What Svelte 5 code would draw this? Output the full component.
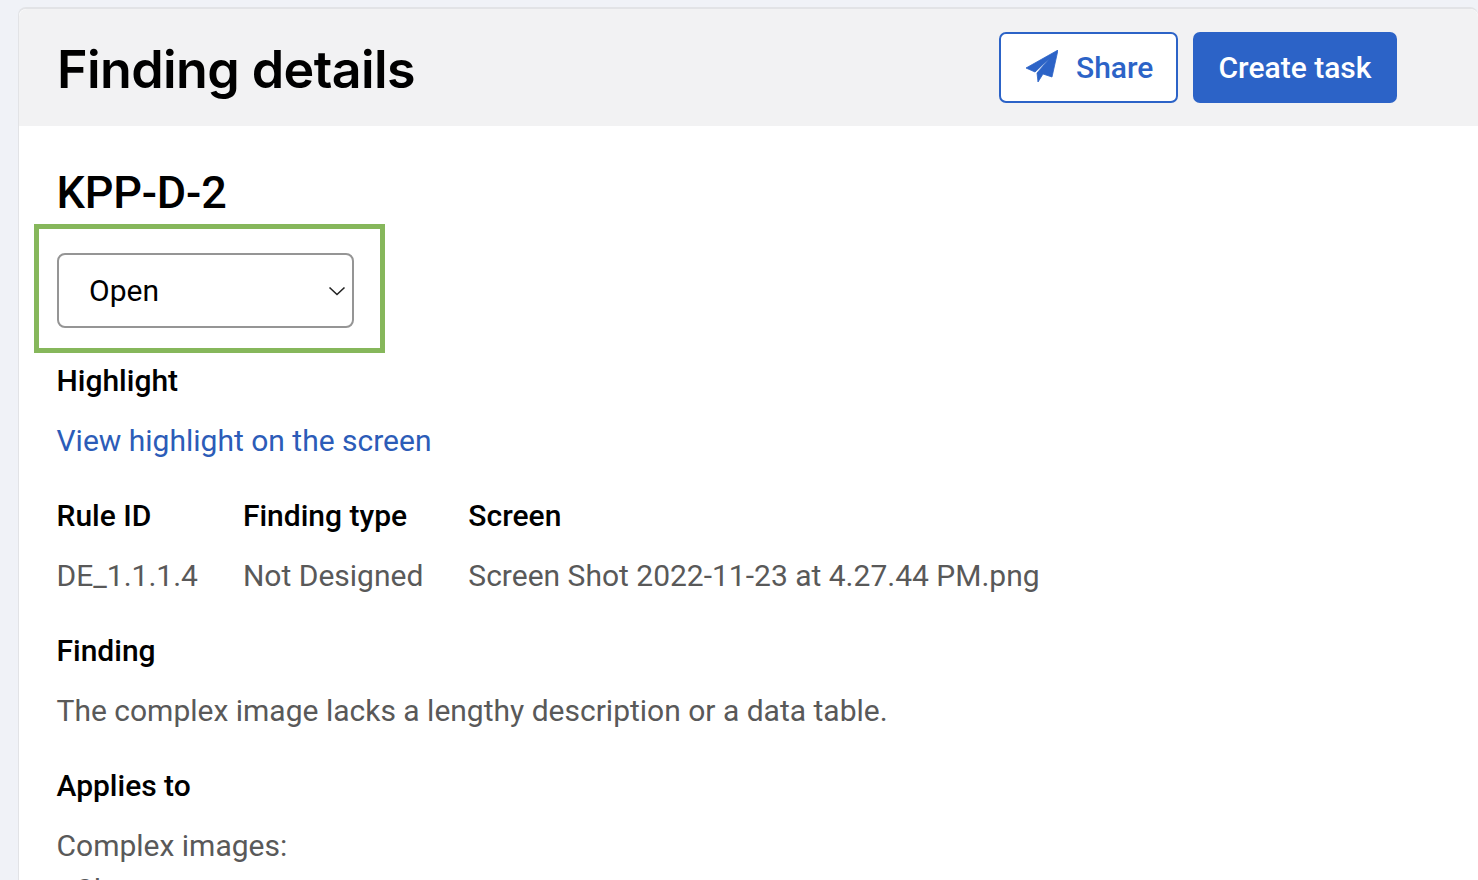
<script>
const meta = [
	{ label: "Rule ID", value: "DE_1.1.1.4" },
	{ label: "Finding type", value: "Not Designed" },
	{ label: "Screen", value: "Screen Shot 2022-11-23 at 4.27.44 PM.png" }
];
</script>

<div class="page">
	<div class="card">
		<header>
			<h1>Finding details</h1>
			<div class="actions">
				<button class="btn share">
					<svg width="32" height="32" viewBox="0 0 32 32" aria-hidden="true">
						<path d="M32 0 L0 18 L9 22 L24 8 L11 23 L12 32 L17 24 L26 27 Z" fill="currentColor" stroke="currentColor" stroke-width="0.8" stroke-linejoin="round" />
					</svg>
					<span>Share</span>
				</button>
				<button class="btn primary">Create task</button>
			</div>
		</header>
		<main>
			<h2>KPP-D-2</h2>
			<div class="status-box">
				<div class="select">
					<span>Open</span>
					<svg width="18" height="10" viewBox="0 0 18 10" aria-hidden="true">
						<path d="M1.5 1.5 L9 8.5 L16.5 1.5" fill="none" stroke="#222" stroke-width="1.6" />
					</svg>
				</div>
			</div>

			<h3 class="first">Highlight</h3>
			<a href="#highlight">View highlight on the screen</a>

			<div class="meta">
				{#each meta as m}
					<div>
						<h3>{m.label}</h3>
						<p>{m.value}</p>
					</div>
				{/each}
			</div>

			<h3>Finding</h3>
			<p>The complex image lacks a lengthy description or a data table.</p>

			<h3 class="applies">Applies to</h3>
			<p>Complex images:</p>
			<ul>
				<li>Charts</li>
			</ul>
		</main>
	</div>
</div>

<style>
:global(body) {
	margin: 0;
	overflow: hidden;
	background: #f0f2f7;
}

.page {
	height: 880px;
	overflow: hidden;
	padding: 7px 0 0 18px;
	box-sizing: border-box;
	font-family: Roboto, sans-serif;
}

.card {
	background: #fff;
	border-left: 1px solid #e2e3e6;
	border-top: 2px solid #e2e3e6;
	border-top-left-radius: 8px;
	border-top-right-radius: 8px;
	min-height: 900px;
}

header {
	background: #f2f2f3;
	height: 117px;
	display: flex;
	align-items: center;
	justify-content: space-between;
	padding: 0 81px 0 38px;
	box-sizing: border-box;
	border-top-left-radius: 8px;
	border-top-right-radius: 8px;
}

h1 {
	margin: 3px 0 0;
	font-family: Inter, sans-serif;
	font-weight: 600;
	font-size: 52px;
	letter-spacing: -0.6px;
	color: #000;
}

.actions {
	display: flex;
	gap: 15px;
}

.btn {
	height: 71px;
	border-radius: 7px;
	font-family: Roboto, sans-serif;
	font-weight: 500;
	font-size: 30px;
	box-sizing: border-box;
	display: flex;
	align-items: center;
	justify-content: center;
}

.share {
	width: 179px;
	gap: 18px;
	padding: 0 0 0 25px;
	justify-content: flex-start;
	background: #fff;
	color: #2c63c7;
	border: 2px solid #2c63c7;
}

.share svg {
	margin-bottom: 3px;
}

.primary {
	width: 204px;
	background: #2c63c7;
	color: #fff;
	border: none;
}

main {
	padding: 37px 0 0 37.5px;
	color: #595959;
	font-size: 30px;
	line-height: 40px;
}

h2 {
	margin: 0;
	color: #000;
	font-weight: 500;
	font-size: 45px;
	line-height: 60px;
	letter-spacing: -0.2px;
}

.status-box {
	margin: 1px 0 0 -22.5px;
	width: 351px;
	height: 129px;
	border: 5px solid #86b75b;
	box-sizing: border-box;
	padding: 24px 0 0 18px;
}

.select {
	width: 297px;
	height: 75px;
	border: 2px solid #959595;
	border-radius: 8px;
	box-sizing: border-box;
	display: flex;
	align-items: center;
	justify-content: space-between;
	padding: 0 6px 0 30px;
	color: #000;
}

h3 {
	margin: 0 0 20px;
	color: #000;
	font-weight: 500;
	font-size: 30px;
	line-height: 40px;
}

h3.first {
	margin-top: 8px;
}

h3.applies {
	margin-top: 35px;
}

p {
	margin: 0;
}

a {
	color: #2c5cb8;
	text-decoration: none;
}

.meta {
	display: flex;
	gap: 45px;
	margin: 35px 0;
}

ul {
	margin: 4px 0 0;
	padding-left: 18px;
}
</style>
